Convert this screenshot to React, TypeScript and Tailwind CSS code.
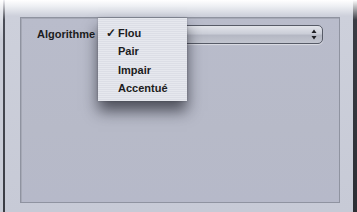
import React from 'react'

const items = ['Flou', 'Pair', 'Impair', 'Accentué']

function UpDownArrows() {
  return (
    <svg width="6" height="11" viewBox="0 0 6 11" className="block">
      <path d="M3 0.5 L5.5 4 L0.5 4 Z" fill="#1e1f24" />
      <path d="M3 10.5 L5.5 7 L0.5 7 Z" fill="#1e1f24" />
    </svg>
  )
}

export default function App() {
  return (
    <div className="relative h-[212px] w-[357px] overflow-hidden bg-[linear-gradient(to_bottom,#ffffff_0px,#eef0f4_6px,#cdd0db_16px,#c7cad6_100%)] font-['Liberation_Sans',Arial,sans-serif]">
      <div className="flex h-full">
        <div className="w-[3px] bg-[linear-gradient(to_bottom,#ffffff,#e4e6ec_12px,#c9ccd7_40px)]" />
        <div className="w-[2px] bg-[linear-gradient(to_bottom,#f0f0f4,#4a4d57_20px,#3a3c44)]" />
        <div className="flex flex-1 flex-col pt-[17px] pl-[15px] pr-[13px]">
          <div className="relative h-[186px] border border-[#8f93a0] bg-[linear-gradient(to_bottom,#b9bccb,#b7bac8_60%,#b6b9c9)] shadow-[inset_1px_1px_0_#a6a9b6]">
            <div className="flex items-center pt-[7px] pl-[16px] pr-[16px]">
              <span className="text-[11px] font-bold leading-none text-[#1c1c20]">Algorithme</span>
              <div className="ml-[6px] flex h-[19px] flex-1 items-center justify-end rounded-[5px] border border-[#575b67] bg-[linear-gradient(to_bottom,#e2e4ea,#cbced8_45%,#b5b8c4_55%,#c2c5cf)] pr-[5px] shadow-[0_1px_1px_rgba(255,255,255,0.5)]">
                <UpDownArrows />
              </div>
            </div>
          </div>
          <div className="h-[9px]" />
        </div>
        <div className="w-[4px] bg-[linear-gradient(to_bottom,#ffffff,#3a3c44_20px,#2c2e34)]" />
      </div>

      <div className="absolute left-[98px] top-[18px] w-[89px] bg-[repeating-linear-gradient(to_bottom,#e6e8ee_0px,#e6e8ee_1px,#dcdee6_1px,#dcdee6_2px)] pt-[6px] pb-[3px] shadow-[0_10px_14px_rgba(20,22,30,0.65),0_0_2px_rgba(0,0,0,0.25)]">
        {items.map((item, i) => (
          <div key={item} className="flex h-[18.5px] items-center">
            <span className="w-[20px] pl-[8px] text-[12px] font-bold leading-none text-[#1c1c20]">
              {i === 0 ? '✓' : ''}
            </span>
            <span className="text-[11px] font-bold leading-none text-[#1c1c20]">{item}</span>
          </div>
        ))}
      </div>
    </div>
  )
}
